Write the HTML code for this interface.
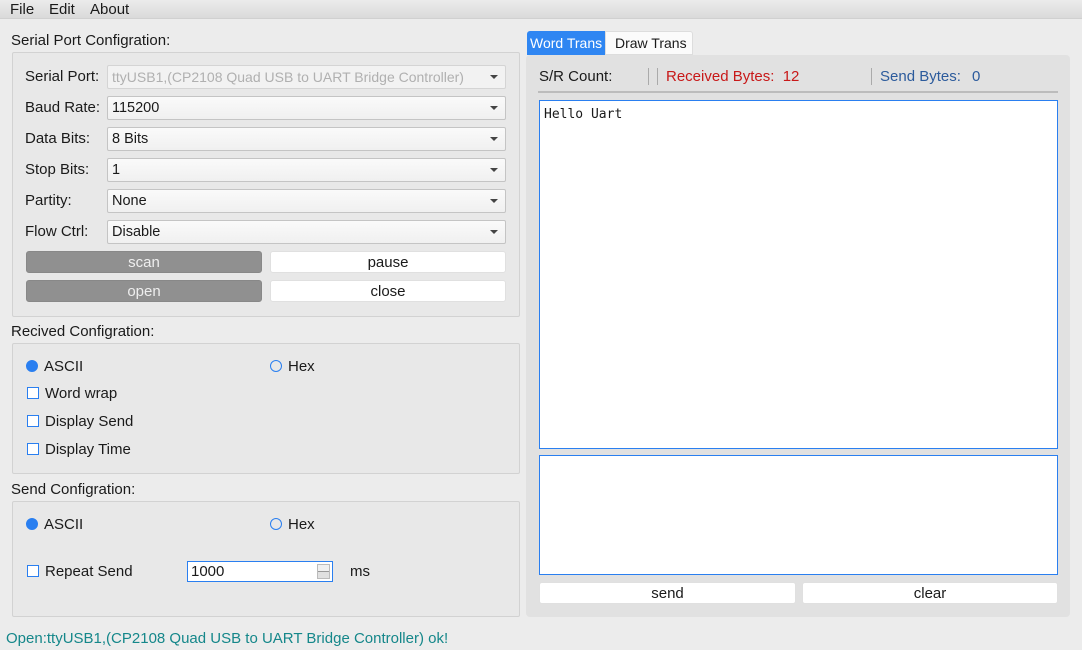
<!DOCTYPE html>
<html><head><meta charset="utf-8"><style>
*{box-sizing:border-box;margin:0;padding:0}
body{width:1082px;height:650px;background:#ececec;font-family:"Liberation Sans",sans-serif;font-size:15px;color:#1a1a1a;position:relative;overflow:hidden}
.a{position:absolute;white-space:nowrap}
.menu{left:0;top:0;width:1082px;height:19px;background:linear-gradient(#ececec,#dadada);border-bottom:1px solid #d0d0d0}
.grp{position:absolute;border:1px solid #d2d2d2;background:#e8e8e8;border-radius:2px}
.cb{position:absolute;left:107px;width:399px;height:24px;background:linear-gradient(#fafafa,#f0f0f0);border:1px solid #c4c4c4;border-radius:2px;padding-left:4px;line-height:23px;font-size:14.5px}
.cb:after{content:"";position:absolute;right:7px;top:9px;border-left:4px solid transparent;border-right:4px solid transparent;border-top:4px solid #444}
.btn{position:absolute;height:22px;border-radius:3px;text-align:center;line-height:22px;background:#fff;border:1px solid #e0e0e0}
.g{background:#909090;color:#eee;border-color:#888}
.rad{position:absolute;width:12px;height:12px;border-radius:50%;border:1px solid #2a7ff0}
.rad.on{background:#2a7ff0}
.chk{position:absolute;width:12px;height:12px;border:1px solid #2a7ff0;background:#fff}
.lbl{position:absolute;white-space:nowrap;line-height:18px}
</style></head><body>
<div class="a menu"></div>
<div class="lbl" style="left:10px;top:1px">File</div>
<div class="lbl" style="left:49px;top:1px">Edit</div>
<div class="lbl" style="left:90px;top:1px">About</div>

<div class="lbl" style="left:11px;top:32px">Serial Port Configration:</div>
<div class="grp" style="left:12px;top:52px;width:508px;height:265px"></div>
<div class="lbl" style="left:25px;top:68px">Serial Port:</div>
<div class="cb" style="top:65px;color:#b0b0b0;background:#f2f2f2;border-color:#d4d4d4;font-size:14px">ttyUSB1,(CP2108 Quad USB to UART Bridge Controller)</div>
<div class="lbl" style="left:25px;top:99px">Baud Rate:</div>
<div class="cb" style="top:96px">115200</div>
<div class="lbl" style="left:25px;top:130px">Data Bits:</div>
<div class="cb" style="top:127px">8 Bits</div>
<div class="lbl" style="left:25px;top:161px">Stop Bits:</div>
<div class="cb" style="top:158px">1</div>
<div class="lbl" style="left:25px;top:192px">Partity:</div>
<div class="cb" style="top:189px">None</div>
<div class="lbl" style="left:25px;top:223px">Flow Ctrl:</div>
<div class="cb" style="top:220px">Disable</div>
<div class="btn g" style="left:26px;top:251px;width:236px">scan</div>
<div class="btn" style="left:270px;top:251px;width:236px">pause</div>
<div class="btn g" style="left:26px;top:280px;width:236px">open</div>
<div class="btn" style="left:270px;top:280px;width:236px">close</div>

<div class="lbl" style="left:11px;top:323px">Recived Configration:</div>
<div class="grp" style="left:12px;top:343px;width:508px;height:131px"></div>
<div class="rad on" style="left:26px;top:360px"></div><div class="lbl" style="left:44px;top:358px">ASCII</div>
<div class="rad" style="left:270px;top:360px"></div><div class="lbl" style="left:288px;top:358px">Hex</div>
<div class="chk" style="left:27px;top:387px"></div><div class="lbl" style="left:45px;top:385px">Word wrap</div>
<div class="chk" style="left:27px;top:415px"></div><div class="lbl" style="left:45px;top:413px">Display Send</div>
<div class="chk" style="left:27px;top:443px"></div><div class="lbl" style="left:45px;top:441px">Display Time</div>

<div class="lbl" style="left:11px;top:481px">Send Configration:</div>
<div class="grp" style="left:12px;top:501px;width:508px;height:116px"></div>
<div class="rad on" style="left:26px;top:518px"></div><div class="lbl" style="left:44px;top:516px">ASCII</div>
<div class="rad" style="left:270px;top:518px"></div><div class="lbl" style="left:288px;top:516px">Hex</div>
<div class="chk" style="left:27px;top:565px"></div><div class="lbl" style="left:45px;top:563px">Repeat Send</div>
<div class="a" style="left:187px;top:561px;width:146px;height:21px;border:1px solid #2a7ff0;background:#fff;padding-left:3px;line-height:19px">1000<div class="a" style="right:2px;top:2px;width:13px;height:15px;border:1px solid #bbb;background:linear-gradient(#f0f0f0 45%,#999 45%,#999 55%,#e0e0e0 55%)"></div></div>
<div class="lbl" style="left:350px;top:563px">ms</div>
<div class="lbl" style="left:6px;top:630px;color:#15878a">Open:ttyUSB1,(CP2108 Quad USB to UART Bridge Controller) ok!</div>

<div class="a" style="left:526px;top:55px;width:544px;height:562px;background:#e1e1e1;border-radius:4px"></div>
<div class="a" style="left:527px;top:31px;width:78px;height:24px;background:#2f86f2;color:#fff;line-height:24px;padding-left:3px;border-radius:3px 0 0 0;font-size:14px">Word Trans</div>
<div class="a" style="left:605px;top:31px;width:88px;height:24px;background:#fbfbfb;border:1px solid #ddd;line-height:22px;padding-left:9px;border-radius:0 3px 0 0;font-size:14px">Draw Trans</div>
<div class="lbl" style="left:539px;top:68px">S/R Count:</div>
<div class="a" style="left:648px;top:68px;width:1px;height:17px;background:#aaa"></div>
<div class="a" style="left:657px;top:68px;width:1px;height:17px;background:#aaa"></div>
<div class="lbl" style="left:666px;top:68px;color:#c81818">Received Bytes:&nbsp; 12</div>
<div class="a" style="left:871px;top:68px;width:1px;height:17px;background:#aaa"></div>
<div class="lbl" style="left:880px;top:68px;color:#2c5b9c">Send Bytes:</div>
<div class="lbl" style="left:972px;top:68px;color:#2c5b9c">0</div>
<div class="a" style="left:538px;top:91px;width:520px;height:2px;background:#bcbcbc"></div>
<div class="a" style="left:539px;top:100px;width:519px;height:349px;background:#fff;border:1px solid #2a7ff0;font-family:'DejaVu Sans Mono','Liberation Mono',monospace;font-size:13px;padding:6px 4px">Hello Uart</div>
<div class="a" style="left:539px;top:455px;width:519px;height:120px;background:#fff;border:1px solid #2a7ff0"></div>
<div class="btn" style="left:539px;top:582px;width:257px">send</div>
<div class="btn" style="left:802px;top:582px;width:256px">clear</div>
</body></html>
